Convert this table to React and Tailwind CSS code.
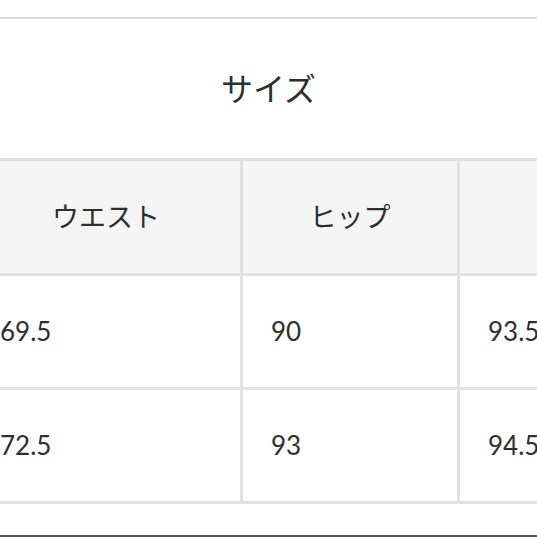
const font = { fontFamily: '"Lato", "Noto Sans CJK JP", sans-serif' };

const headers = ['ウエスト', 'ヒップ', ''];
const rows = [
  ['69.5', '90', '93.5'],
  ['72.5', '93', '94.5'],
];

export default function App() {
  return (
    <div
      className="w-[537px] h-[537px] overflow-hidden bg-white text-[#2e2e2e] flex flex-col"
      style={font}
    >
      <div className="h-[17px] shrink-0" />
      <div className="h-[141px] shrink-0 border-t-2 border-[#dedede] flex items-center justify-center">
        <span className="text-[32px] leading-none">サイズ</span>
      </div>

      <div className="-ml-[28px] w-[800px] bg-[#e1e1e1] grid grid-cols-[268px_214px_214px_1fr] gap-[3px] py-[3px]">
        {headers.map((h, i) => (
          <div key={i} className="h-[112px] bg-[#f5f5f5] flex items-center justify-center text-[27px]">
            {h}
          </div>
        ))}
        <div className="h-[112px] bg-[#f5f5f5]" />
        {rows.map((r, i) => (
          <>
            {r.map((v, j) => (
              <div key={`${i}-${j}`} className="h-[111px] bg-white flex items-center pl-[28px] text-[26px]">
                {v}
              </div>
            ))}
            <div key={`${i}-x`} className="h-[111px] bg-white" />
          </>
        ))}
      </div>

      <div className="flex-1" />
      <div className="h-[2px] shrink-0 bg-[#555]" />
    </div>
  );
}
